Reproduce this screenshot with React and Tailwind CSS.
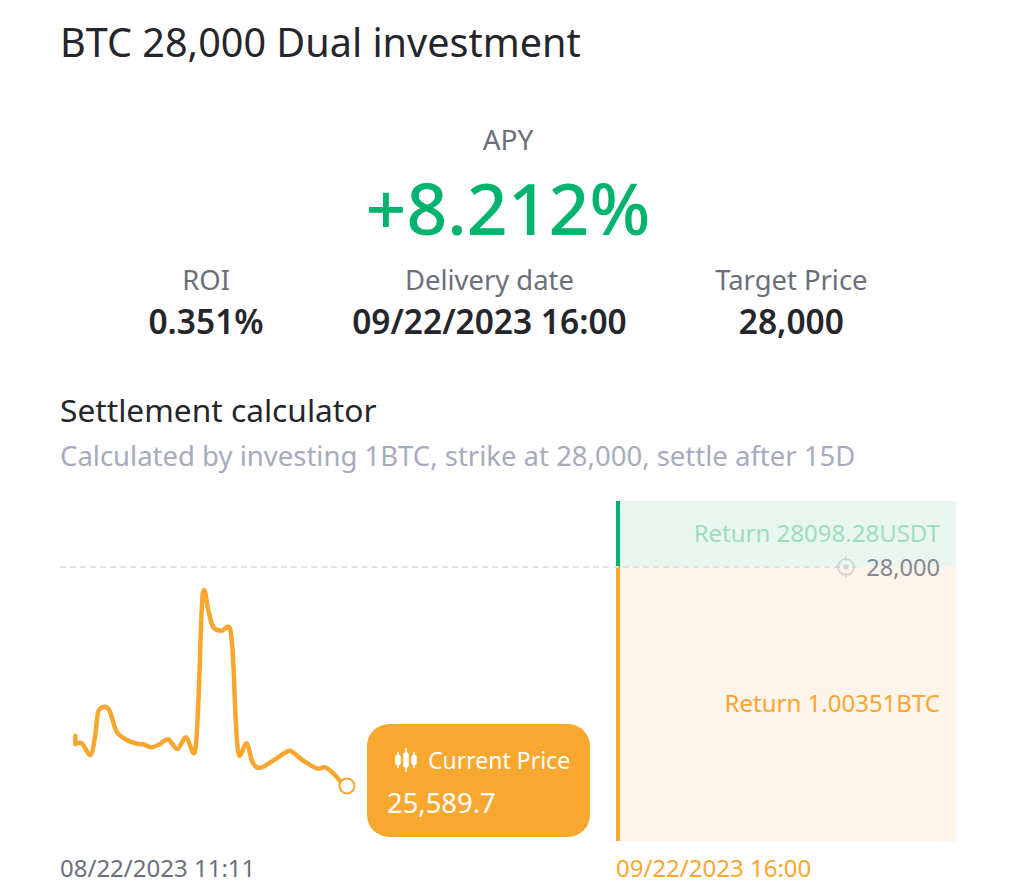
const pts = [[46,522],[65,520],[92,555],[105,500],[115,425],[135,410],[150,425],[170,485],[200,510],[235,522],[250,523],[275,532],[300,522],[325,508],[352,537],[378,502],[404,547],[415,400],[425,120],[433,60],[445,120],[460,172],[485,182],[510,176],[520,280],[527,450],[537,555],[560,520],[575,570],[590,592],[610,590],[650,565],[685,543],[700,548],[730,572],[770,595],[795,592],[820,610],[842,635]]
  .map(([x, y]) => [60 + x / 3, 570 + y / 3]);

function smooth(p) {
  let d = `M${p[0][0]} ${p[0][1] - 8}L${p[0][0]} ${p[0][1]}`;
  for (let i = 0; i < p.length - 1; i++) {
    const a = p[i - 1] || p[i], b = p[i], c = p[i + 1], e = p[i + 2] || c;
    const c1 = [b[0] + (c[0] - a[0]) / 6, b[1] + (c[1] - a[1]) / 6];
    const c2 = [c[0] - (e[0] - b[0]) / 6, c[1] - (e[1] - b[1]) / 6];
    d += `C${c1[0].toFixed(1)} ${c1[1].toFixed(1)} ${c2[0].toFixed(1)} ${c2[1].toFixed(1)} ${c[0].toFixed(1)} ${c[1].toFixed(1)}`;
  }
  return d;
}

function Stat({ label, value }) {
  return (
    <div className="flex flex-col items-center">
      <div className="text-[27.4px] leading-[36px] text-[#6b6f7b]">{label}</div>
      <div className="mt-[3px] text-[33.5px] leading-[40px] font-semibold text-[#24262b]">{value}</div>
    </div>
  );
}

export default function App() {
  return (
    <div className="h-[894px] overflow-hidden bg-white pl-[60px] pr-[56px] font-['Noto_Sans',sans-serif]">
      <h1 className="pt-[16px] text-[39.6px] leading-[52px] text-[#24262b]">BTC 28,000 Dual investment</h1>
      <div className="mt-[53px] flex flex-col items-center">
        <div className="text-[28px] leading-[36px] text-[#6b6f7b]">APY</div>
        <div className="mt-[3px] text-[71.5px] leading-[96px] font-medium text-[#00b36f]">+8.212%</div>
      </div>
      <div className="mt-[6px] flex justify-evenly">
        <Stat label="ROI" value="0.351%" />
        <Stat label="Delivery date" value="09/22/2023 16:00" />
        <Stat label="Target Price" value="28,000" />
      </div>
      <h2 className="mt-[49px] text-[31.7px] leading-[40px] text-[#24262b]">Settlement calculator</h2>
      <p className="mt-[8px] text-[27.5px] leading-[36px] text-[#a6abbd]">Calculated by investing 1BTC, strike at 28,000, settle after 15D</p>

      <div className="relative mt-[27px] grid h-[340px] grid-cols-[556px_340px]">
        <div />
        <div className="flex flex-col">
          <div className="flex h-[66px] justify-end border-l-[4px] border-[#00b36f] bg-[#e9f6f0] pr-[16px] pt-[14px]">
            <span className="text-[24px] leading-[36px] text-[#9bddbd]">Return 28098.28USDT</span>
          </div>
          <div className="flex flex-1 items-center justify-end border-l-[4px] border-[#f9a62f] bg-[#fef4ea] pr-[16px] pb-[2px]">
            <span className="text-[24px] leading-[36px] text-[#f9a62f]">Return 1.00351BTC</span>
          </div>
        </div>

        <div className="absolute left-0 right-[116px] top-[65px] border-t-2 border-dashed border-[#dfe3e4]" />
        <div className="absolute right-[16px] top-[48px] flex items-center gap-[9px] text-[23.6px] leading-[36px] text-[#85888d]">
          <svg width="22" height="22" viewBox="0 0 22 22" fill="none" stroke="#cfd1cf" strokeWidth="1.6">
            <circle cx="11" cy="11" r="8" />
            <path d="M11 0.5V5M11 17V21.5M0.5 11H5M17 11H21.5" />
            <circle cx="11" cy="11" r="2.5" fill="#cfd1cf" stroke="none" />
          </svg>
          <span>28,000</span>
        </div>

        <svg className="absolute left-0 top-0" width="556" height="340" viewBox="60 501 556 340" fill="none">
          <path d={smooth(pts)} stroke="#f9a62f" strokeWidth="4.5" strokeLinejoin="round" strokeLinecap="round" />
          <circle cx="347" cy="786" r="7.5" stroke="#f9a62f" strokeWidth="2" fill="#fff" />
        </svg>

        <div className="absolute left-[307px] top-[223px] h-[113px] w-[223px] rounded-[22px] bg-[#f9a82f] pl-[20px] text-white">
          <div className="mt-[18px] flex h-[36px] items-center text-[23px]">
            <svg className="ml-[8px] mr-[11px]" width="22" height="26" viewBox="0 0 22 26" fill="#fff" stroke="#fff" strokeWidth="1.6">
              <path d="M3 5V21M11 1V25M19 5V21" fill="none" />
              <rect x="1" y="8.5" width="4" height="9" rx="1.5" />
              <rect x="9" y="6" width="4" height="14" rx="1.5" />
              <rect x="17" y="8.5" width="4" height="9" rx="1.5" />
            </svg>
            <span>Current Price</span>
          </div>
          <div className="mt-[7px] text-[27.4px] leading-[36px]">25,589.7</div>
        </div>
      </div>

      <div className="mt-[9px] grid grid-cols-[556px_340px] text-[24px] leading-[36px]">
        <span className="text-[#6b6f7b]">08/22/2023 11:11</span>
        <span className="text-[#f9a62f]">09/22/2023 16:00</span>
      </div>
    </div>
  );
}
